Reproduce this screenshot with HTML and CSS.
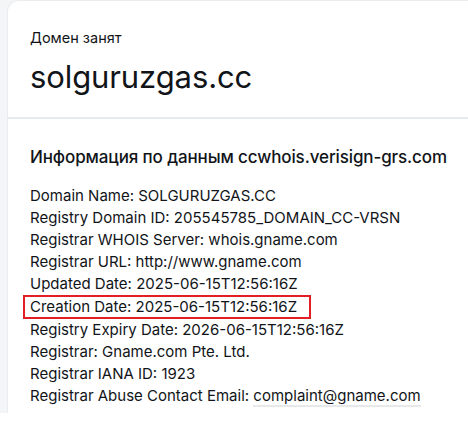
FILE: index.html
```html
<!DOCTYPE html>
<html lang="ru">
<head>
<meta charset="utf-8">
<link rel="stylesheet" href="styles.css">
</head>
<body>
<div class="page">
  <div class="card">
    <div class="head">
      <div class="status">Домен занят</div>
      <div class="domain">solguruzgas.cc</div>
    </div>
    <div class="info">
      <div class="title">Информация по данным ccwhois.verisign-grs.com</div>
      <div class="rows">
        <div class="row">Domain Name: SOLGURUZGAS.CC</div>
        <div class="row">Registry Domain ID: 205545785_DOMAIN_CC-VRSN</div>
        <div class="row">Registrar WHOIS Server: whois.gname.com</div>
        <div class="row">Registrar URL: http://www.gname.com</div>
        <div class="row">Updated Date: 2025-06-15T12:56:16Z</div>
        <div class="row"><span class="mark">Creation Date: 2025-06-15T12:56:16Z</span></div>
        <div class="row">Registry Expiry Date: 2026-06-15T12:56:16Z</div>
        <div class="row">Registrar: Gname.com Pte. Ltd.</div>
        <div class="row">Registrar IANA ID: 1923</div>
        <div class="row">Registrar Abuse Contact Email: <span class="mail">complaint@gname.com</span></div>
      </div>
    </div>
  </div>
</div>
</body>
</html>
```
FILE: styles.css
```css
html, body {
  margin: 0;
  padding: 0;
  background: #ffffff;
}
body {
  width: 468px;
  height: 422px;
  overflow: hidden;
  font-family: Inter, "Noto Sans", sans-serif;
  color: #111418;
}
.page {
  background: #f3f5f6;
  padding-left: 7px;
  height: 413px;
  overflow: hidden;
}
.card {
  background: #ffffff;
  width: 500px;
  height: 413px;
  border-top-left-radius: 11px;
  box-shadow: inset 1px 1px 0 #e9edef;
}
.head {
  padding: 29px 23px 0;
  height: 88px;
  border-bottom: 2px solid #e8ebed;
}
.status {
  font-size: 14.5px;
  line-height: 18px;
}
.domain {
  font-size: 31px;
  line-height: 36px;
  margin-top: 12px;
  letter-spacing: -0.1px;
}
.info {
  padding: 27px 23px 0;
}
.title {
  font-size: 17px;
  font-weight: 500;
  line-height: 22px;
  letter-spacing: -0.12px;
}
.rows {
  margin-top: 17px;
  font-size: 15px;
  line-height: 22px;
}
.row {
  white-space: nowrap;
}
.mark {
  display: inline-block;
  margin-left: -7px;
  padding: 0 12px 0 5px;
  line-height: 20px;
  border: 2px solid #e31e25;
}
.mail {
  border-bottom: 2px solid #e6e8ea;
}
```
